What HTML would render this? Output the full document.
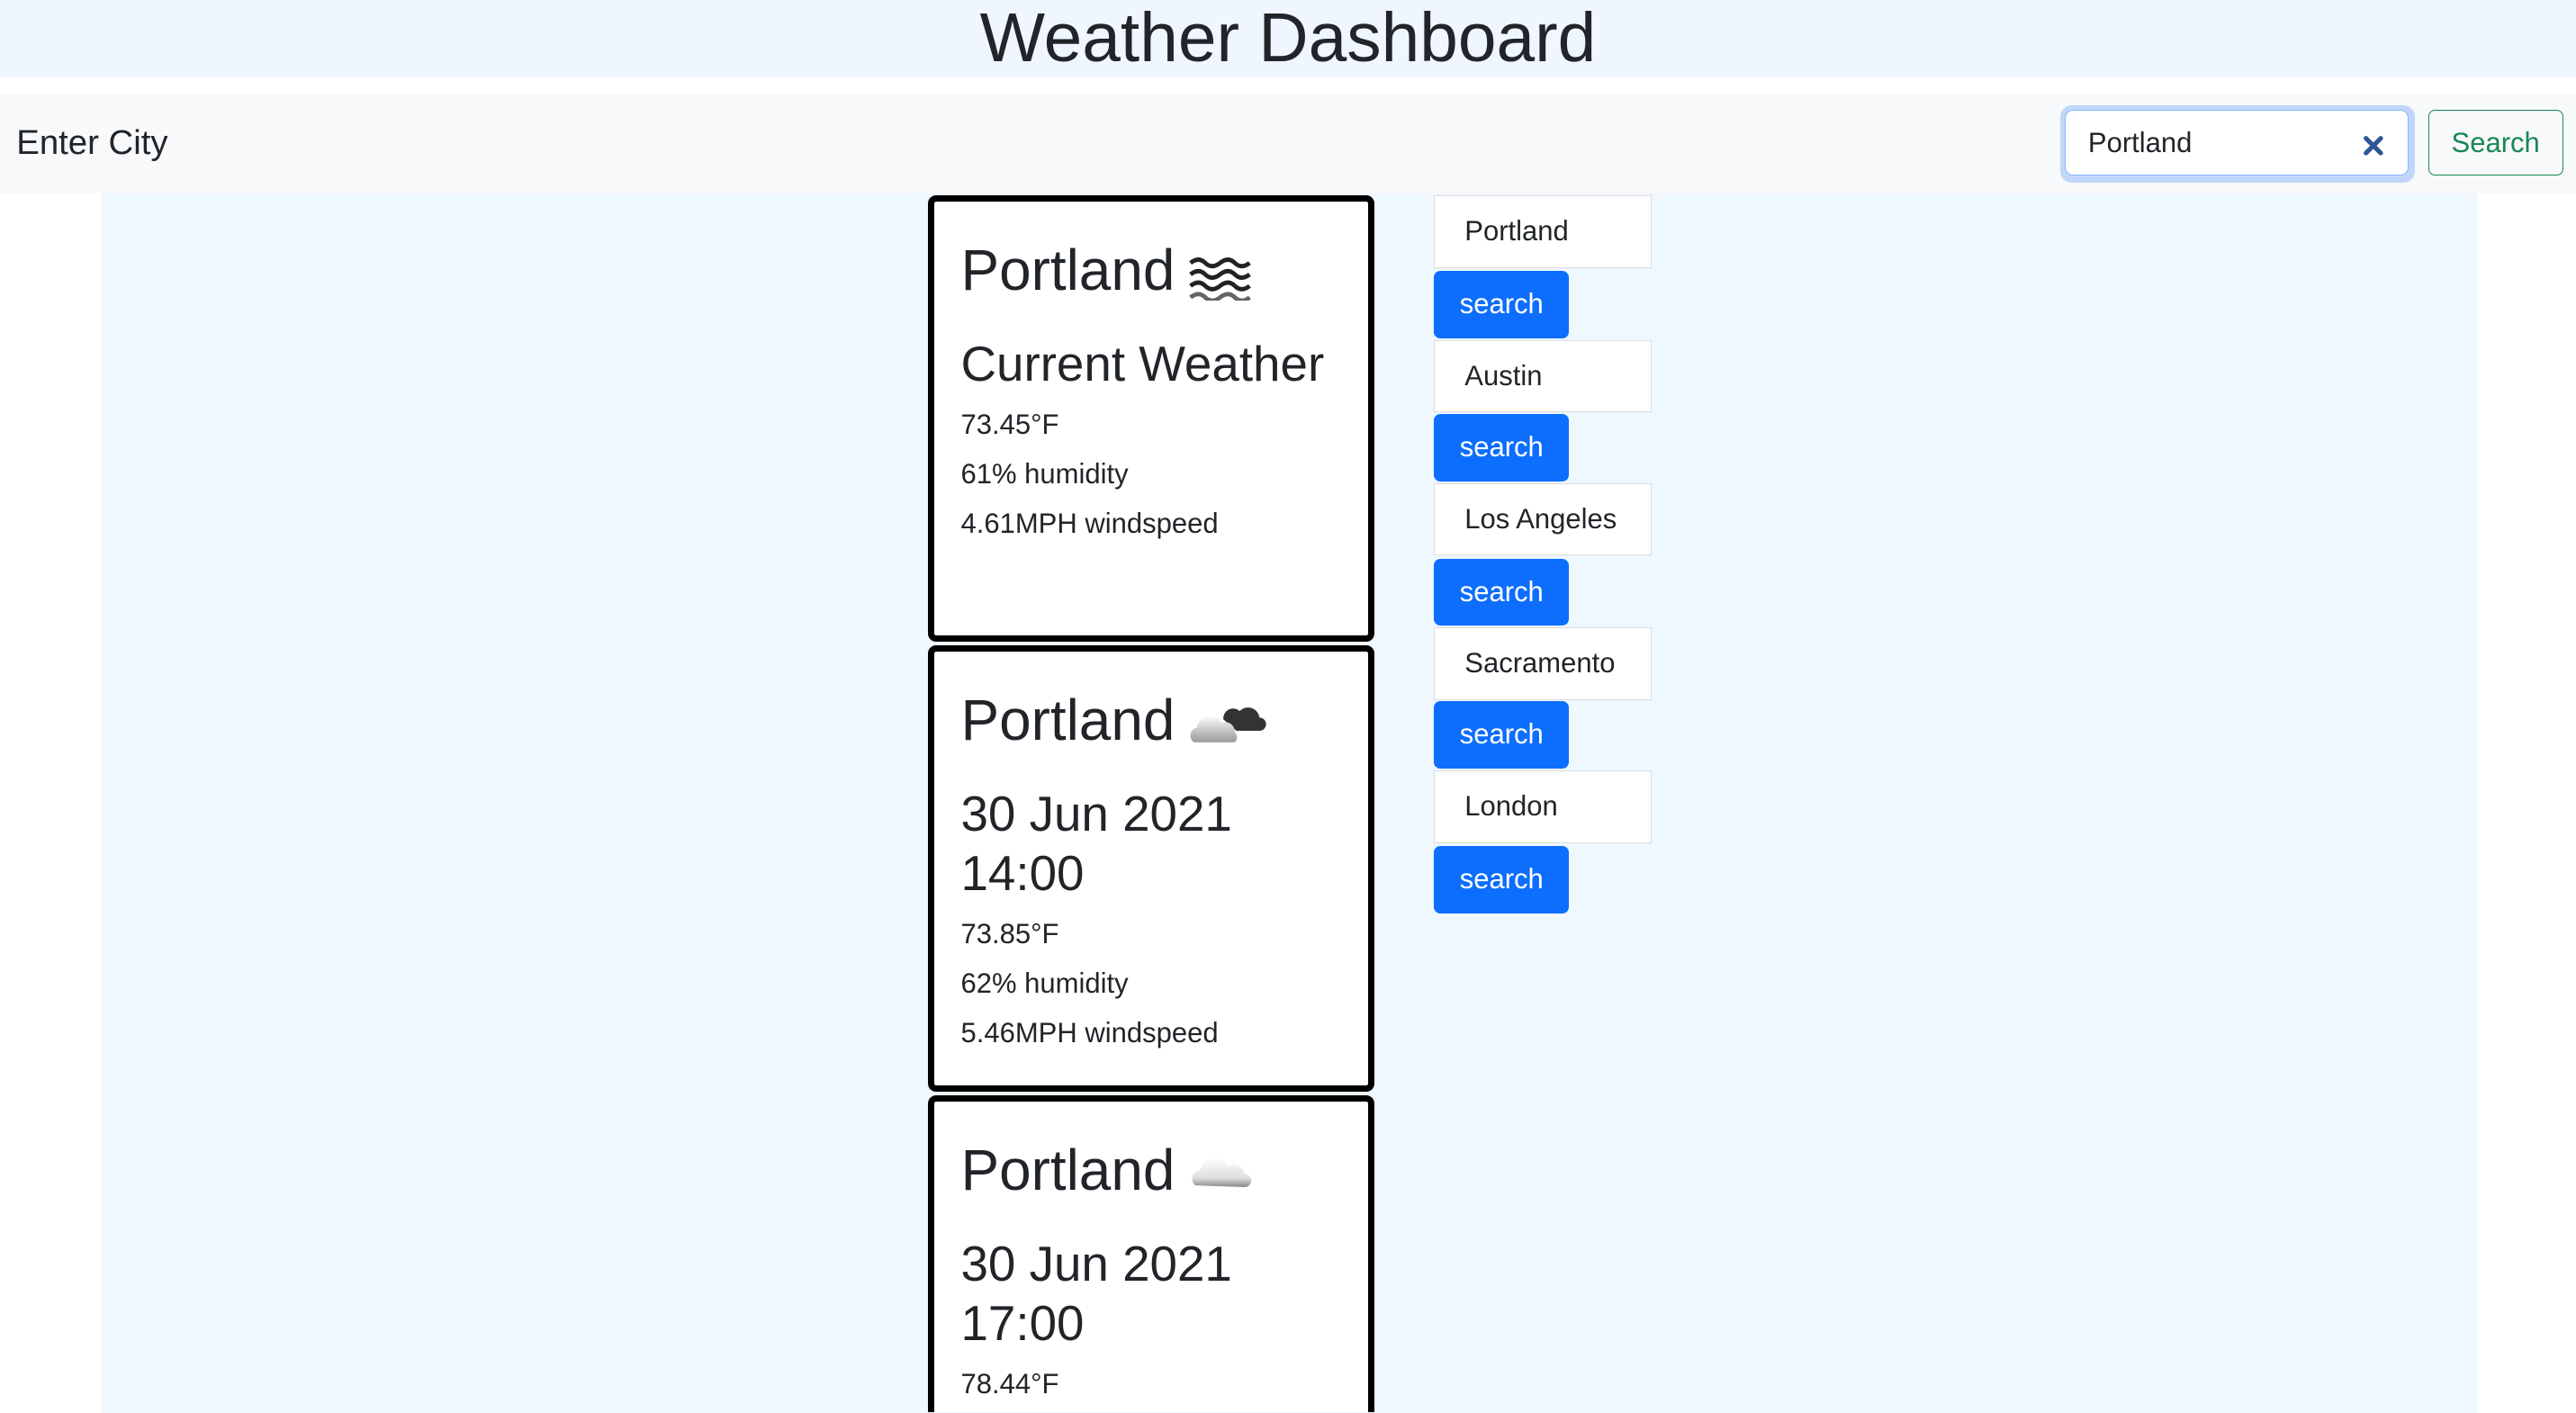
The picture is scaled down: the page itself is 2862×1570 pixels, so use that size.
<!DOCTYPE html>
<html><head><meta charset="utf-8"><style>
html,body{margin:0;padding:0;background:#fff;overflow:hidden;width:2862px;height:1570px;}
#w{zoom:1.82526;width:1568px;height:860px;position:relative;overflow:hidden;font-family:"Liberation Sans",sans-serif;color:#212529;}
.a{position:absolute;}
.card{position:absolute;left:565px;width:264px;height:264px;border:4px solid #000;border-radius:5px;background:#fff;}
.card .t{position:absolute;left:16px;font-size:35px;white-space:nowrap;}
.card .h{position:absolute;left:16px;font-size:30px;line-height:36px;white-space:nowrap;}
.card .p{position:absolute;left:16px;font-size:17px;white-space:nowrap;}
.city{position:absolute;left:873px;width:131px;height:43px;border:1px solid #dcdcdc;background:#fff;font-size:17px;line-height:43px;text-indent:18px;}
.btn{position:absolute;left:873px;width:82px;height:41px;background:#0d6efd;color:#fff;border-radius:4px;font-size:17px;line-height:40px;text-align:center;}
</style></head><body><div id="w">
<div class="a" style="left:0;top:0;width:1568px;height:47px;background:#eff6ff;"></div>
<div class="a" style="left:0;top:0;width:1568px;text-align:center;font-size:42px;line-height:47px;">Weather Dashboard</div>
<div class="a" style="left:0;top:57px;width:1568px;height:61px;background:#f8f9fa;"></div>
<div class="a" style="left:10px;top:75px;font-size:21px;">Enter City</div>
<div class="a" style="left:1254px;top:64px;width:216px;height:47px;border-radius:7px;background:#c0d7fb;"></div>
<div class="a" style="left:1257px;top:67px;width:208px;height:39px;border:1px solid #86b7fe;border-radius:5px;background:#fff;"></div>
<div class="a" style="left:1271px;top:77px;font-size:17px;">Portland</div>
<svg class="a" style="left:1438px;top:82px" width="13" height="13" viewBox="0 0 13 13"><path d="M2 2L11 11M11 2L2 11" stroke="#2f5597" stroke-width="2.8" stroke-linecap="round"/></svg>
<div class="a" style="left:1478px;top:67px;width:81px;height:39px;border:1px solid #198754;border-radius:4px;color:#198754;font-size:17px;line-height:39px;text-align:center;">Search</div>
<div class="a" style="left:62px;top:118px;width:1446px;height:742px;background:#eff7ff;"></div>

<div class="card" style="top:119px;">
<div class="t" style="top:21px;">Portland</div>
<svg class="a" style="left:154px;top:32px" width="40" height="28" viewBox="0 0 40 28"><g fill="none" stroke="#222" stroke-width="2.6"><path d="M2 5q5-4 9 0t9 0 9 0 9 0"/><path d="M2 12q5-4 9 0t9 0 9 0 9 0"/><path d="M2 19q5-4 9 0t9 0 9 0 9 0"/><path d="M2 26q5-4 9 0t9 0 9 0 9 0" opacity=".7"/></g></svg>
<div class="h" style="top:81px;">Current Weather</div>
<div class="p" style="top:126px;">73.45°F</div>
<div class="p" style="top:156px;">61% humidity</div>
<div class="p" style="top:186px;">4.61MPH windspeed</div>
</div>
<div class="card" style="top:393px;">
<div class="t" style="top:21px;">Portland</div>
<svg class="a" style="left:154px;top:25px" width="48" height="32" viewBox="0 0 48 32"><defs><linearGradient id="g1" x1="0" y1="0" x2="0" y2="1"><stop offset="0" stop-color="#fff"/><stop offset="1" stop-color="#999"/></linearGradient></defs><path d="M22 16a6 6 0 0 1 10-5a7 7 0 0 1 12 4a4 4 0 0 1 0 8h-14z" fill="#333"/><path d="M4 30a5 5 0 0 1 2-9a8 8 0 0 1 15-3a6 6 0 0 1 8 6a4 4 0 0 1 0 6z" fill="url(#g1)"/></svg>
<div class="h" style="top:81px;">30 Jun 2021<br>14:00</div>
<div class="p" style="top:162px;">73.85°F</div>
<div class="p" style="top:192px;">62% humidity</div>
<div class="p" style="top:222px;">5.46MPH windspeed</div>
</div>
<div class="card" style="top:667px;height:189px;border-bottom:none;border-radius:5px 5px 0 0;overflow:hidden;">
<div class="t" style="top:21px;">Portland</div>
<svg class="a" style="left:154px;top:29px" width="42" height="26" viewBox="0 0 42 26"><defs><linearGradient id="g2" x1="0" y1="0" x2="0" y2="1"><stop offset="0" stop-color="#fff"/><stop offset=".7" stop-color="#ddd"/><stop offset="1" stop-color="#888"/></linearGradient></defs><path d="M5 22a5 5 0 0 1 3-9a9 9 0 0 1 17-3a7 7 0 0 1 10 5a4 4 0 0 1 0 8z" fill="url(#g2)"/></svg>
<div class="h" style="top:81px;">30 Jun 2021<br>17:00</div>
<div class="p" style="top:162px;">78.44°F</div>
</div>

<div class="city" style="top:119px;">Portland</div>
<div class="btn" style="top:165px;">search</div>
<div class="city" style="top:207px;">Austin</div>
<div class="btn" style="top:252px;">search</div>
<div class="city" style="top:294px;">Los Angeles</div>
<div class="btn" style="top:340px;">search</div>
<div class="city" style="top:382px;">Sacramento</div>
<div class="btn" style="top:427px;">search</div>
<div class="city" style="top:469px;">London</div>
<div class="btn" style="top:515px;">search</div>
</div></body></html>
